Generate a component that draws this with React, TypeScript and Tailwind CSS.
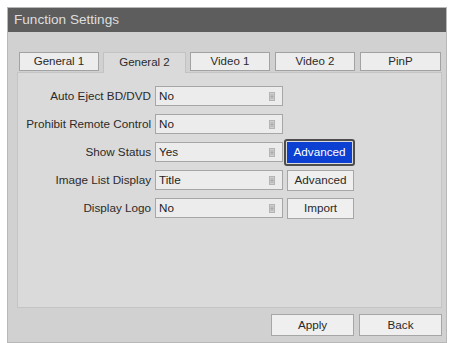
import React from "react";

const font = { fontFamily: '"Liberation Sans", Arial, sans-serif' };

function SelectIcon() {
  return (
    <svg width="6" height="9" viewBox="0 0 6 9" className="shrink-0">
      <rect x="0.5" y="0.5" width="5" height="8" fill="#cfcfcf" stroke="#b4b4b4" />
      <line x1="1.5" y1="3" x2="4.5" y2="3" stroke="#a8a8a8" />
      <line x1="1.5" y1="4.5" x2="4.5" y2="4.5" stroke="#a8a8a8" />
      <line x1="1.5" y1="6" x2="4.5" y2="6" stroke="#a8a8a8" />
    </svg>
  );
}

const rows: { label: string; value: string; button?: string; focused?: boolean }[] = [
  { label: "Auto Eject BD/DVD", value: "No" },
  { label: "Prohibit Remote Control", value: "No" },
  { label: "Show Status", value: "Yes", button: "Advanced", focused: true },
  { label: "Image List Display", value: "Title", button: "Advanced" },
  { label: "Display Logo", value: "No", button: "Import" },
];

const tabs = [
  { name: "General 1", w: "w-[80px]" },
  { name: "General 2", w: "w-[83px]", active: true },
  { name: "Video 1", w: "w-[80px]" },
  { name: "Video 2", w: "w-[80px]" },
  { name: "PinP", w: "w-[81px]" },
];

export default function App() {
  return (
    <div className="w-[451px] h-[343px] bg-white pt-[7px] pl-[7px] overflow-hidden" style={font}>
      <div className="w-[440px] h-[336px] flex flex-col border border-[#b8b8b8] bg-[#d1d1d1]">
        <div className="h-[24px] shrink-0 bg-[#5d5d5d] flex items-center pl-[6px] text-[13.6px] text-[#dedede]">
          Function Settings
        </div>
        <div className="flex flex-col flex-1 pl-[9px] pr-[4px]">
          <div className="flex items-end pt-[19px] pl-[2px] h-[40px]">
            {tabs.map((t, i) => (
              <div
                key={t.name}
                className={
                  t.active
                    ? `${t.w} h-[21px] ml-[4px] flex items-center justify-center bg-[#dadada] border border-b-0 border-[#c2c2c2] text-[11.5px] text-[#2a2a2a] relative top-[1px]`
                    : `${t.w} h-[19px] ${i === 0 ? "" : i === 2 ? "ml-[4px]" : "ml-[5px]"} mb-[1px] flex items-center justify-center bg-[#ededed] border border-[#a2a2a2] text-[11.5px] text-[#2a2a2a]`
                }
              >
                {t.name}
              </div>
            ))}
          </div>
          <div className="h-[236px] bg-[#dadada] border border-[#c4c4c4] flex flex-col gap-[8px] pt-[13px]">
            {rows.map((r) => (
              <div key={r.label} className="flex items-center h-[20px]">
                <div className="w-[133px] text-right text-[11.7px] text-[#2a2a2a] pr-[0px] whitespace-nowrap">
                  {r.label}
                </div>
                <div className="ml-[4px] w-[128px] h-[20px] bg-[#ececec] border border-[#a6a6a6] flex items-center justify-between pl-[3px] pr-[7px] text-[11.7px] text-[#1e1e1e]">
                  <span>{r.value}</span>
                  <SelectIcon />
                </div>
                {r.button &&
                  (r.focused ? (
                    <div className="ml-[1px] w-[71px] h-[27px] rounded-[3px] border-2 border-[#4d4d4d] p-[1px] flex">
                      <div className="flex-1 bg-[#0b40d2] flex items-center justify-center text-[11.7px] text-white">
                        {r.button}
                      </div>
                    </div>
                  ) : (
                    <div className="ml-[4px] w-[67px] h-[21px] bg-[#efefef] border border-[#a6a6a6] flex items-center justify-center text-[11.7px] text-[#2a2a2a]">
                      {r.button}
                    </div>
                  ))}
              </div>
            ))}
          </div>
          <div className="flex justify-end gap-[5px] pt-[6px] pr-[0px]">
            <div className="w-[83px] h-[22px] bg-[#efefef] border border-[#a6a6a6] flex items-center justify-center text-[11.7px] text-[#2a2a2a]">
              Apply
            </div>
            <div className="w-[83px] h-[22px] bg-[#efefef] border border-[#a6a6a6] flex items-center justify-center text-[11.7px] text-[#2a2a2a]">
              Back
            </div>
          </div>
        </div>
      </div>
    </div>
  );
}
